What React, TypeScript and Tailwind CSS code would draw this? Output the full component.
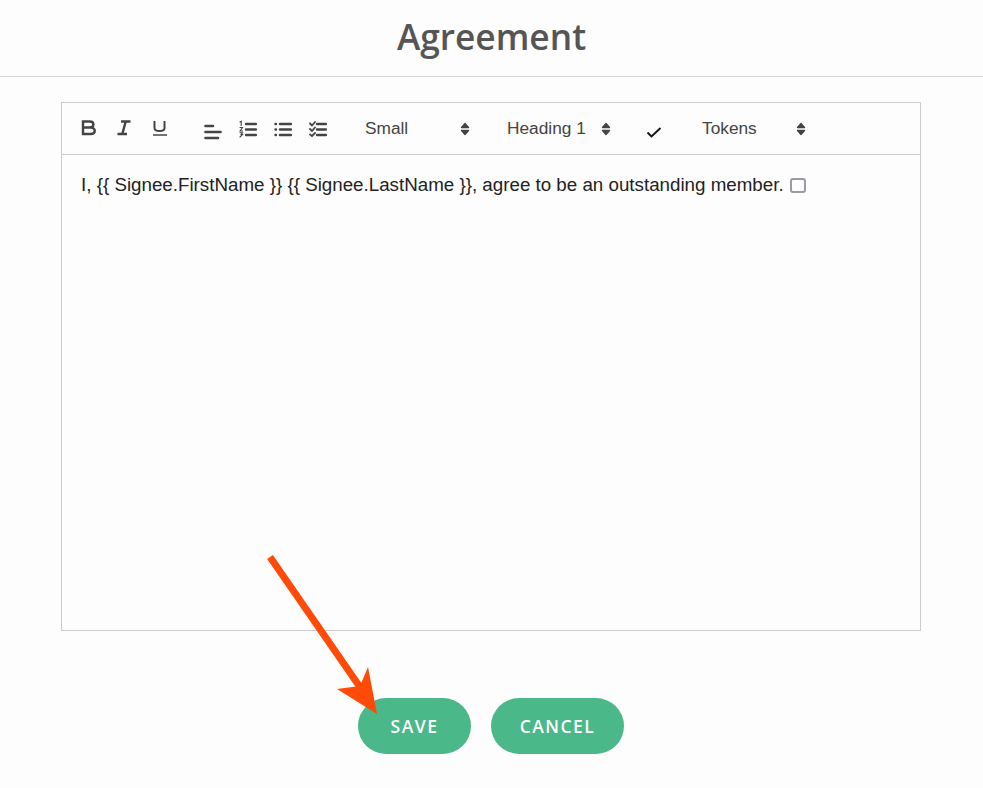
const SANS = "font-['Liberation_Sans',Arial,sans-serif]";
const UI = "font-['Open_Sans','Noto_Sans',sans-serif]";

function Chevrons() {
  return (
    <svg width="10" height="14" viewBox="0 0 10 14" className="text-[#444]">
      <path d="M5 1.5 L8.5 5.5 H1.5 Z M1.5 8.5 H8.5 L5 12.5 Z" fill="currentColor" stroke="currentColor" strokeWidth="1.4" strokeLinejoin="round" />
    </svg>
  );
}

function Picker({ label, width, textWidth }: { label: string; width: string; textWidth: string }) {
  return (
    <div className={`flex items-center ${width}`}>
      <span className={`text-[17.3px] text-[#444] ${textWidth}`}>{label}</span>
      <Chevrons />
    </div>
  );
}

function Toolbar() {
  return (
    <div className={`flex h-[52px] items-center border-b border-[#ccc] pl-[18px] ${SANS}`}>
      <svg width="18" height="18" viewBox="0 0 18 18" fill="none" stroke="#444" strokeWidth="2.4" className="mr-[17px] -mt-[1px]">
        <path d="M3 2.5 H10 C14.5 2.5 14.5 8.5 10 8.5 H3 Z M3 8.5 H11 C16 8.5 16 15 11 15 H3 Z" />
      </svg>
      <svg width="18" height="18" viewBox="0 0 18 18" fill="none" stroke="#444" strokeWidth="2.4" className="mr-[18px] -mt-[1px]">
        <path d="M6 2.5 H15.5 M2.5 15 H12 M10.7 2.5 L7.3 15" />
      </svg>
      <svg width="18" height="18" viewBox="0 0 18 18" fill="none" stroke="#444" strokeWidth="2" className="mr-[35px] -mt-[2px]">
        <path d="M3.5 2 V9 C3.5 13 13.5 13 13.5 9 V2" />
        <path d="M2 16 H16" strokeWidth="1.5" />
      </svg>
      <svg width="18" height="18" viewBox="0 0 18 18" fill="none" stroke="#444" strokeWidth="2.6" strokeLinecap="round" className="mr-[17px] mt-[5px]">
        <path d="M1.5 4 H9 M1.5 10 H16.5 M1.5 16 H14" />
      </svg>
      <svg width="18" height="18" viewBox="0 0 18 18" fill="none" stroke="#444" strokeWidth="2.4" strokeLinecap="round" className="mr-[17px]">
        <path d="M7 4 H17 M7 9.5 H17 M7 15 H17" />
        <path d="M1 2 L2.2 1.2 V5.5 M1 7.5 H3.5 L1 11 H3.5 M1 12.8 H3.5 L2.2 14.5 H3.5 L1 17" strokeWidth="1.1" />
      </svg>
      <svg width="18" height="18" viewBox="0 0 18 18" fill="none" stroke="#444" strokeWidth="2.4" strokeLinecap="round" className="mr-[17px]">
        <path d="M6 4 H17 M6 9.5 H17 M6 15 H17 M1.5 4 H2 M1.5 9.5 H2 M1.5 15 H2" />
      </svg>
      <svg width="18" height="18" viewBox="0 0 18 18" fill="none" stroke="#444" strokeWidth="2.4" strokeLinecap="round" className="mr-[38px]">
        <path d="M8 4 H17 M8 9.5 H17 M8 15 H17" />
        <path d="M1 3.5 L3 5.5 L6 2 M1 9 L3 11 L6 7.5 M1 14.5 L3 16 L6 13" strokeWidth="1.8" />
      </svg>
      <Picker label="Small" width="w-[142px]" textWidth="w-[95px]" />
      <Picker label="Heading 1" width="w-[140px]" textWidth="w-[94px]" />
      <svg width="18" height="18" viewBox="0 0 18 18" fill="none" stroke="#111" strokeWidth="1.8" className="mr-[39px] mt-[6px] -ml-[2px]">
        <path d="M2.5 9.5 L6.5 13.5 L15.5 5" />
      </svg>
      <Picker label="Tokens" width="w-[110px]" textWidth="w-[94px]" />
    </div>
  );
}

export default function App() {
  return (
    <div className="relative min-h-[788px] bg-[#fdfdfd]">
      <h1 className={`flex h-[77px] items-center justify-center border-b border-[#d4d4d4] pb-[3px] text-[35.3px] font-semibold text-[#555] ${UI}`}>
        Agreement
      </h1>

      <div className="mx-[61px] mt-[25px] h-[529px] w-[860px] border border-[#ccc]">
        <Toolbar />
        <p className={`flex items-center gap-[6px] pl-[19px] pt-[17px] text-[18.75px] leading-[26px] text-[#222] ${SANS}`}>
          I, {"{{"} Signee.FirstName {"}}"} {"{{"} Signee.LastName {"}}"}, agree to be an outstanding member.
          <span className="h-[15px] w-[16px] rounded-[3px] border-2 border-[#9a9aa4]" />
        </p>
      </div>

      <div className={`mt-[67px] flex justify-center gap-[20px] pr-[1px] ${UI}`}>
        <button className="h-[56px] w-[113px] rounded-[28px] bg-[#4ab888] text-[17.5px] font-semibold tracking-[1.5px] text-white">SAVE</button>
        <button className="h-[56px] w-[133px] rounded-[28px] bg-[#4ab888] text-[17.5px] font-semibold tracking-[1.5px] text-white">CANCEL</button>
      </div>

      {/* annotation arrow over the save button */}
      <svg width="983" height="788" viewBox="0 0 983 788" className="pointer-events-none absolute left-0 top-0">
        <path d="M270 557 L362 690" stroke="#ff4a08" strokeWidth="7" fill="none" />
        <path d="M377 714 L337 689 L360 686 L368 667 Z" fill="#ff4a08" />
      </svg>
    </div>
  );
}
